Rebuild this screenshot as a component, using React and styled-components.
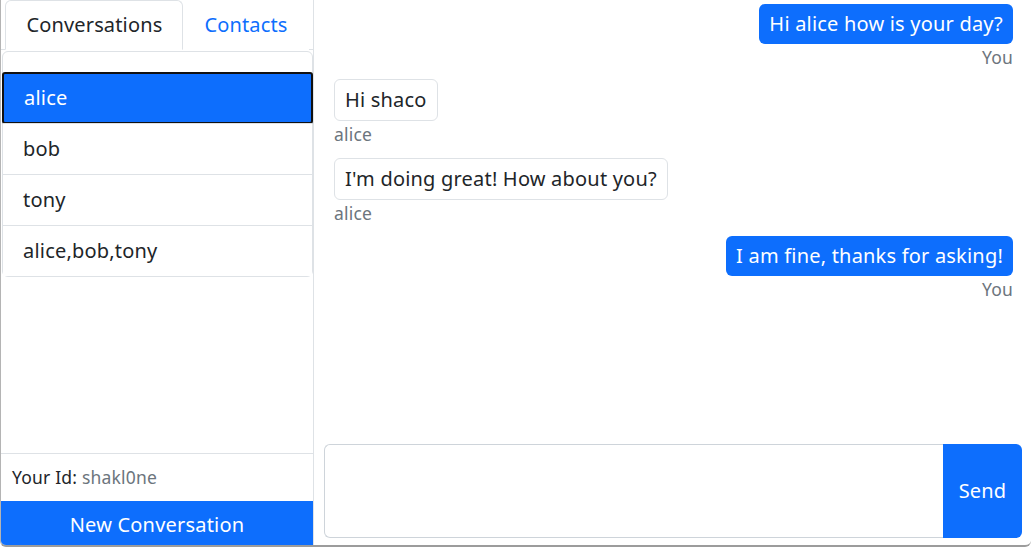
import React from "react";
import styled, { createGlobalStyle } from "styled-components";

const BLUE = "#0d6efd";
const TEXT = "#212529";
const MUTED = "#6c757d";
const BORDER = "#dee2e6";
const FONT = `"Noto Sans", "Segoe UI", Roboto, sans-serif`;
const SPACING = "0.2px";

const GlobalStyle = createGlobalStyle`
  html, body { margin: 0; padding: 0; background: #ffffff; }
  body { font-family: ${FONT}; color: ${TEXT}; letter-spacing: ${SPACING}; }
  * { box-sizing: border-box; }
`;

const Frame = styled.div`
  width: 1031px;
  height: 547px;
  border-left: 1px solid #b4b4b4;
  border-bottom: 2px solid #9c9c9c;
  border-bottom-left-radius: 6px;
  border-bottom-right-radius: 6px;
  overflow: hidden;
`;

const AppShell = styled.div`
  display: flex;
  height: 548px;
`;

const Sidebar = styled.aside`
  width: 313px;
  flex-shrink: 0;
  display: flex;
  flex-direction: column;
  border-right: 1px solid ${BORDER};
`;

const TabNav = styled.nav`
  display: flex;
  justify-content: center;
  border-bottom: 1px solid ${BORDER};
  height: 50px;
  flex-shrink: 0;
`;

const Tab = styled.button`
  font-family: ${FONT};
  font-size: 20px;
  line-height: 30px;
  letter-spacing: 0.15px;
  padding: 9px 20px 10px;
  margin-bottom: -1px;
  background: #fff;
  border: 1px solid ${(p) => (p.$active ? BORDER : "transparent")};
  border-bottom-color: ${(p) => (p.$active ? "#fff" : "transparent")};
  border-radius: 6px 6px 0 0;
  color: ${(p) => (p.$active ? TEXT : BLUE)};
  cursor: pointer;
`;

const TabContent = styled.div`
  flex: 1;
  min-height: 0;
  overflow: hidden;
`;

const ListBox = styled.div`
  margin: 1px 0 0 1px;
  border: 1px solid ${BORDER};
  border-radius: 6px;
  padding-top: 20px;
  display: flex;
  flex-direction: column;
`;

const ListItem = styled.div`
  font-size: 20px;
  line-height: 30px;
  padding: 10px 20px;
  height: 51px;
  border-top: ${(p) => (p.$first ? "none" : `1px solid ${BORDER}`)};
  color: ${(p) => (p.$active ? "#fff" : TEXT)};
  background: ${(p) => (p.$active ? BLUE : "#fff")};
  ${(p) =>
    p.$active &&
    `
    height: 52px;
    margin: 0 -1px -1px -1px;
    border: 2px solid #111;
    border-radius: 3px;
    padding: 9px 20px;
  `}
`;

const IdBar = styled.div`
  flex-shrink: 0;
  height: 48px;
  border-top: 1px solid ${BORDER};
  padding: 10px 11px;
  font-size: 17.5px;
  line-height: 26px;
  color: ${TEXT};
`;

const Muted = styled.span`
  color: ${MUTED};
`;

const NewButton = styled.button`
  flex-shrink: 0;
  height: 47px;
  width: 100%;
  border: none;
  background: ${BLUE};
  color: #fff;
  font-family: ${FONT};
  font-size: 20px;
  line-height: 30px;
  letter-spacing: ${SPACING};
  padding: 9px 12px 8px;
  cursor: pointer;
`;

const Chat = styled.main`
  flex: 1;
  display: flex;
  flex-direction: column;
  min-width: 0;
`;

const Messages = styled.div`
  flex: 1;
  overflow: hidden;
  padding: 4px 18px 0 20px;
  display: flex;
  flex-direction: column;
`;

const MessageGroup = styled.div`
  display: flex;
  flex-direction: column;
  align-items: ${(p) => (p.$mine ? "flex-end" : "flex-start")};
  margin-bottom: ${(p) => (p.$mine ? "9px" : "10.5px")};
`;

const Bubble = styled.div`
  font-size: 20px;
  line-height: 30px;
  border-radius: 6px;
  padding: 5px 10px;
  background: ${(p) => (p.$mine ? BLUE : "#fff")};
  color: ${(p) => (p.$mine ? "#fff" : TEXT)};
  border: ${(p) => (p.$mine ? "none" : `1px solid ${BORDER}`)};
`;

const Sender = styled.div`
  font-size: 17.5px;
  line-height: 26px;
  color: ${MUTED};
`;

const Composer = styled.form`
  flex-shrink: 0;
  display: flex;
  height: 94px;
  margin: 10px 9px 10px 10px;
`;

const Input = styled.textarea`
  flex: 1;
  resize: none;
  border: 1px solid #ced4da;
  border-right: none;
  border-radius: 6px 0 0 6px;
  font-family: ${FONT};
  font-size: 20px;
  padding: 7px 15px;
  outline: none;
`;

const SendButton = styled.button`
  width: 79px;
  border: none;
  border-radius: 0 6px 6px 0;
  background: ${BLUE};
  color: #fff;
  font-family: ${FONT};
  font-size: 20px;
  letter-spacing: ${SPACING};
  padding: 0 0 2px;
  cursor: pointer;
`;

const conversations = ["alice", "bob", "tony", "alice,bob,tony"];

const messages = [
  { text: "Hi alice how is your day?", mine: true, sender: "You" },
  { text: "Hi shaco", mine: false, sender: "alice" },
  { text: "I'm doing great! How about you?", mine: false, sender: "alice" },
  { text: "I am fine, thanks for asking!", mine: true, sender: "You" },
];

export default function App() {
  return (
    <>
      <GlobalStyle />
      <Frame>
        <AppShell>
          <Sidebar>
            <TabNav>
              <Tab $active>Conversations</Tab>
              <Tab>Contacts</Tab>
            </TabNav>
            <TabContent>
              <ListBox>
                {conversations.map((c, i) => (
                  <ListItem key={c} $active={i === 0} $first={i === 0}>
                    {c}
                  </ListItem>
                ))}
              </ListBox>
            </TabContent>
            <IdBar>
              Your Id: <Muted>shakl0ne</Muted>
            </IdBar>
            <NewButton type="button">New Conversation</NewButton>
          </Sidebar>
          <Chat>
            <Messages>
              {messages.map((m, i) => (
                <MessageGroup key={i} $mine={m.mine}>
                  <Bubble $mine={m.mine}>{m.text}</Bubble>
                  <Sender>{m.sender}</Sender>
                </MessageGroup>
              ))}
            </Messages>
            <Composer onSubmit={(e) => e.preventDefault()}>
              <Input />
              <SendButton type="submit">Send</SendButton>
            </Composer>
          </Chat>
        </AppShell>
      </Frame>
    </>
  );
}
